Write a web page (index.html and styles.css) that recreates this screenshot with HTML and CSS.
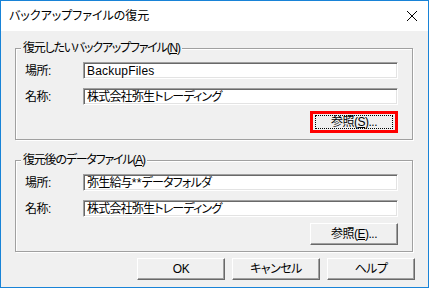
FILE: index.html
```html
<!DOCTYPE html>
<html lang="ja">
<head>
	<meta charset="UTF-8">
	<meta name="viewport" content="width=device-width, initial-scale=1.0">
	<title>バックアップファイルの復元</title>
	<link rel="stylesheet" href="styles.css">
</head>
<body>
	<div class="dialog">
		<div class="titlebar">
			<span class="title">バックアップファイルの復元</span>
			<svg class="close" width="12" height="12" viewBox="0 0 12 12">
				<path d="M1 1 L11 11 M11 1 L1 11" stroke="#000" stroke-width="1" fill="none"/>
			</svg>
		</div>

		<div class="content">
			<fieldset class="group">
				<legend>復元したいバックアップファイル(<u>N</u>)</legend>
				<div class="row">
					<label>場所:</label>
					<div class="field latin">BackupFiles</div>
				</div>
				<div class="row">
					<label>名称:</label>
					<div class="field">株式会社弥生トレーディング</div>
				</div>
				<div class="actions">
					<button class="btn marked"><span class="focus">参照(<u>S</u>)...</span></button>
				</div>
			</fieldset>

			<fieldset class="group">
				<legend>復元後のデータファイル(<u>A</u>)</legend>
				<div class="row">
					<label>場所:</label>
					<div class="field">弥生給与<span class="latin">**</span>データフォルダ</div>
				</div>
				<div class="row">
					<label>名称:</label>
					<div class="field">株式会社弥生トレーディング</div>
				</div>
				<div class="actions">
					<button class="btn">参照(<u>E</u>)...</button>
				</div>
			</fieldset>

			<div class="footer">
				<button class="btn">OK</button>
				<button class="btn">キャンセル</button>
				<button class="btn">ヘルプ</button>
			</div>
		</div>
	</div>
</body>
</html>
```

FILE: styles.css
```css
html, body {
	margin: 0;
	padding: 0;
}
body {
	font-family: "Liberation Sans", "Noto Sans CJK JP", sans-serif;
	font-size: 12px;
	line-height: 14px;
	color: #000;
	font-feature-settings: "palt";
}
.dialog {
	width: 429px;
	height: 288px;
	box-sizing: border-box;
	border: 1px solid #1883d7;
	background-color: #f0f0f0;
	display: flex;
	flex-direction: column;
}
.titlebar {
	height: 30px;
	background-color: #fff;
	display: flex;
	align-items: center;
	justify-content: space-between;
	padding: 0 10px 0 8px;
}
.title {
	font-size: 12px;
}
.close {
	display: block;
}
.content {
	padding: 10px 15px 0 14px;
}
.group {
	margin: 0 0 13px 0;
	padding: 7px 14px 5px 9px;
	border: 1px solid #a0a0a0;
	box-shadow: inset 1px 1px 0 #fff, 1px 1px 0 #fff;
	height: 99px;
	box-sizing: border-box;
}
.group legend {
	padding: 0 2px;
	margin-left: -4px;
	background-color: #f0f0f0;
	letter-spacing: -1.2px;
}
.row {
	display: flex;
	align-items: center;
	margin-bottom: 9px;
}
.row + .row {
	margin-bottom: 6px;
}
.row label {
	width: 58px;
	letter-spacing: -0.5px;
}
.field {
	width: 315px;
	height: 17px;
	box-sizing: border-box;
	background-color: #fff;
	border-top: 1px solid #a0a0a0;
	border-left: 1px solid #a0a0a0;
	border-right: 1px solid #fff;
	border-bottom: 1px solid #fff;
	box-shadow: inset 1px 1px 0 #696969, inset -1px -1px 0 #e3e3e3;
	padding: 1px 3px 0 3px;
	line-height: 14px;
	letter-spacing: -0.8px;
	white-space: nowrap;
	overflow: hidden;
}
.latin {
	letter-spacing: 0.2px;
}
.actions {
	display: flex;
	justify-content: flex-end;
}
.btn {
	width: 88px;
	height: 22px;
	padding: 0;
	font: inherit;
	color: #000;
	background-color: #f0f0f0;
	border-top: 1px solid #fff;
	border-left: 1px solid #fff;
	border-right: 1px solid #696969;
	border-bottom: 1px solid #696969;
	box-shadow: inset -1px -1px 0 #a0a0a0;
	display: flex;
	align-items: center;
	justify-content: center;
	letter-spacing: -0.5px;
}
.btn.marked {
	border: 3px solid #f00;
	box-shadow: none;
	padding: 0 2px;
}
.btn .focus {
	flex: 1;
	align-self: stretch;
	display: flex;
	align-items: center;
	justify-content: center;
	border: 1px dotted #000;
	margin: 1px 0;
}
.footer {
	display: flex;
	justify-content: flex-end;
	gap: 7px;
	margin-top: -7px;
	margin-right: -2px;
}
```
